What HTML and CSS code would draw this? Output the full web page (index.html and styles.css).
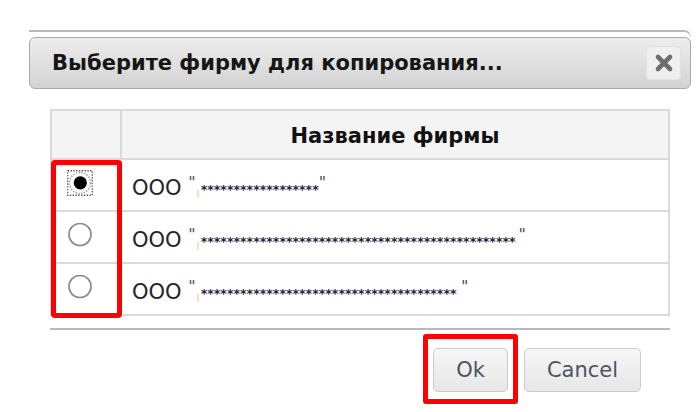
FILE: index.html
```html
<!DOCTYPE html>
<html lang="ru">
<head>
<meta charset="utf-8">
<title>Выберите фирму</title>
<link rel="stylesheet" href="styles.css">
</head>
<body>
<div class="dialog">
  <div class="frame-top"></div>
  <div class="titlebar">
    <span class="title">Выберите фирму для копирования...</span>
    <button class="close" type="button" aria-label="Закрыть">
      <svg width="20" height="20" viewBox="0 0 20 20"><path d="M4 4 L16 16 M16 4 L4 16" stroke="#6e6e6e" stroke-width="4.6" stroke-linecap="round"/></svg>
    </button>
  </div>
  <div class="content">
    <div class="grid-wrap">
      <table class="grid">
        <thead>
          <tr><th class="sel"></th><th class="name">Название фирмы</th></tr>
        </thead>
        <tbody>
          <tr>
            <td class="sel">
              <svg class="radio" width="26" height="26" viewBox="0 0 26 26">
                <rect x="0.75" y="0.75" width="24.5" height="24.5" fill="none" stroke="#555" stroke-width="1.3" stroke-dasharray="1.4 1.4"/>
                <circle cx="13" cy="13" r="10.5" fill="none" stroke="#9a9a9a" stroke-width="1.4" stroke-dasharray="1.4 1.4"/>
                <circle cx="13.3" cy="12.8" r="6.6" fill="#000"/>
              </svg>
            </td>
            <td class="name"><span class="org">ООО</span> <span class="q">"</span><i class="caret"></i><span class="mask">******************</span><span class="q">"</span></td>
          </tr>
          <tr>
            <td class="sel">
              <svg class="radio" width="26" height="26" viewBox="0 0 26 26"><circle cx="13" cy="12.5" r="11" fill="#fff" stroke="#8c8c8c" stroke-width="1.7"/></svg>
            </td>
            <td class="name"><span class="org">ООО</span> <span class="q">"</span><i class="caret"></i><span class="mask">************************************************</span><span class="q gap">"</span></td>
          </tr>
          <tr>
            <td class="sel">
              <svg class="radio" width="26" height="26" viewBox="0 0 26 26"><circle cx="13" cy="12.5" r="11" fill="#fff" stroke="#8c8c8c" stroke-width="1.7"/></svg>
            </td>
            <td class="name"><span class="org">ООО</span> <span class="q">"</span><i class="caret"></i><span class="mask">*************************************** </span><span class="q">"</span></td>
          </tr>
        </tbody>
      </table>
      <div class="mark mark-radios"></div>
    </div>
    <div class="sep"></div>
    <div class="buttons">
      <span class="ok-wrap"><button class="btn btn-ok" type="button">Ok</button></span>
      <button class="btn btn-cancel" type="button">Cancel</button>
    </div>
  </div>
</div>
</body>
</html>
```
FILE: styles.css
```css
html, body {
  margin: 0;
  padding: 0;
  background: #fff;
}
body {
  min-height: 412px;
  font-family: "DejaVu Sans", Verdana, sans-serif;
  color: #222;
}
.dialog {
  margin: 30px 0 0 29px;
  width: 662px;
  padding-bottom: 18px;
}
.frame-top {
  height: 5px;
  border-top: 2px solid #b8b8b8;
  border-right: 1px solid #cfcfcf;
  border-top-right-radius: 8px;
}
.titlebar {
  box-sizing: border-box;
  height: 52px;
  border: 1px solid #a9a9a9;
  border-radius: 6px;
  background: linear-gradient(#ededed, #d3d3d3);
  display: flex;
  align-items: center;
  justify-content: space-between;
  padding: 0 9px 0 22px;
}
.title {
  font-weight: bold;
  font-size: 21px;
  color: #161616;
}
.close {
  box-sizing: border-box;
  width: 35px;
  height: 34px;
  padding: 0;
  border: 1px solid #e2e2e2;
  border-radius: 4px;
  background: #efefef;
  display: flex;
  align-items: center;
  justify-content: center;
}
.content {
  padding: 20px 21px 0;
}
.grid-wrap {
  position: relative;
}
.grid {
  width: 620px;
  border-collapse: separate;
  border-spacing: 0;
  border-top: 2px solid #dadada;
  border-left: 2px solid #dadada;
  table-layout: fixed;
}
.grid th, .grid td {
  border-right: 2px solid #dadada;
  border-bottom: 2px solid #dadada;
  padding: 0;
}
.grid th {
  box-sizing: border-box;
  height: 49px;
  padding-top: 3px;
  background: #f4f4f5;
  font-weight: bold;
  font-size: 21px;
  color: #111;
  text-align: center;
}
.grid th.sel {
  width: 70px;
}
.grid td {
  box-sizing: border-box;
  height: 52px;
  vertical-align: middle;
}
.grid td.sel {
  vertical-align: top;
  padding: 10px 0 0 15px;
}
.grid td.sel .radio {
  display: block;
}
.grid td.name {
  padding-left: 10px;
  padding-top: 2px;
  white-space: nowrap;
  font-size: 21px;
  color: #262626;
}
.q {
  font-size: 16px;
  vertical-align: 7px;
  color: #4a4f66;
}
.q.gap {
  margin-left: 3px;
}
.caret {
  display: inline-block;
  width: 2px;
  height: 8px;
  margin: 0 2px 0 1px;
  background: #fbe1bb;
  vertical-align: -3px;
}
.mask {
  font-size: 12.55px;
  font-weight: bold;
  vertical-align: 1px;
  color: #23233a;
  white-space: pre;
}
.mark {
  position: absolute;
  box-sizing: border-box;
  border: 5px solid #ff0000;
  border-radius: 4px;
}
.mark-radios {
  left: 1px;
  top: 51px;
  width: 71px;
  height: 158px;
}
.sep {
  margin-top: 12px;
  height: 2px;
  background: #b9b9b9;
  width: 620px;
}
.buttons {
  display: flex;
  justify-content: flex-end;
  gap: 16px;
  padding: 18px 29px 0 0;
  width: 620px;
  box-sizing: border-box;
}
.ok-wrap {
  position: relative;
  display: flex;
}
.ok-wrap::after {
  content: "";
  position: absolute;
  left: -10px;
  top: -14px;
  width: 95px;
  height: 70px;
  box-sizing: border-box;
  border: 5px solid #ff0000;
  border-radius: 3px;
}
.btn {
  box-sizing: border-box;
  height: 44px;
  padding: 0;
  border: 1px solid #cbcbcb;
  border-radius: 5px;
  background: linear-gradient(#f6f6f6, #e7e7e7);
  font-family: "DejaVu Sans", Verdana, sans-serif;
  font-size: 21px;
  color: #4b5663;
}
.btn-ok {
  width: 75px;
}
.btn-cancel {
  width: 117px;
}
```
